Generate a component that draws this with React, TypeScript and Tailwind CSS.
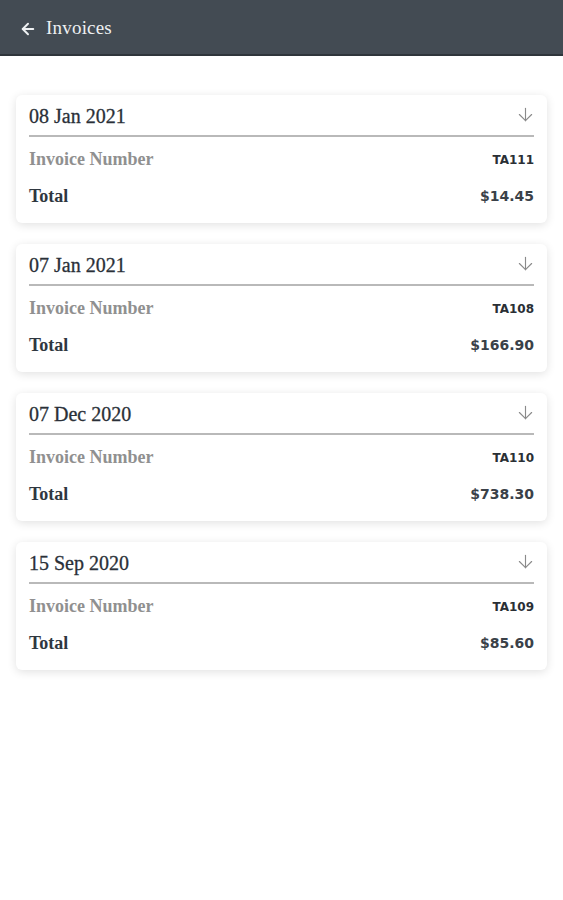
import { ArrowDown, ArrowLeft } from "lucide-react";

type Invoice = { date: string; number: string; total: string };

const invoices: Invoice[] = [
  { date: "08 Jan 2021", number: "TA111", total: "$14.45" },
  { date: "07 Jan 2021", number: "TA108", total: "$166.90" },
  { date: "07 Dec 2020", number: "TA110", total: "$738.30" },
  { date: "15 Sep 2020", number: "TA109", total: "$85.60" },
];

const serif = "font-['Liberation_Serif',serif]";
const sans = "font-['DejaVu_Sans',sans-serif]";

export default function App() {
  return (
    <div className="min-h-[900px] w-full bg-white">
      <header className="h-[56px] bg-[#434b53] border-b-2 border-[#2f353b] flex items-center pt-[3px] pl-[19px] gap-[9px]">
        <ArrowLeft size={18} strokeWidth={2.6} className="text-[#eef0f2]" />
        <span className={`${serif} text-[19px] text-[#eef0f2] tracking-[0.2px]`}>Invoices</span>
      </header>

      <main className="px-4 pt-[39px] flex flex-col gap-[21px]">
        {invoices.map((inv) => (
          <section
            key={inv.number}
            className="bg-white rounded-[6px] shadow-[0_2px_10px_rgba(0,0,0,0.12)] px-[13px] pb-[8px]"
          >
            <div className="h-[40px] flex items-center justify-between pt-[2px]">
              <span className={`${serif} font-medium text-[20px] text-[#2a3038] [-webkit-text-stroke:0.3px_#2a3038]`}>{inv.date}</span>
              <ArrowDown size={21} strokeWidth={1.3} className="text-[#8a8a8a] -mr-[2px] -mt-[4px]" />
            </div>
            <div className="h-[2px] bg-[#b9b9b9]" />
            <div className="pt-[4px]">
              <div className="h-[37px] flex items-center justify-between">
                <span className={`${serif} font-bold text-[18px] text-[#909090]`}>Invoice Number</span>
                <span className={`${sans} font-bold text-[12px] text-[#2a2f35]`}>{inv.number}</span>
              </div>
              <div className="h-[37px] flex items-center justify-between">
                <span className={`${serif} font-bold text-[18px] text-[#2f3740]`}>Total</span>
                <span className={`${sans} font-bold text-[14px] text-[#3a4148]`}>{inv.total}</span>
              </div>
            </div>
          </section>
        ))}
      </main>
    </div>
  );
}
